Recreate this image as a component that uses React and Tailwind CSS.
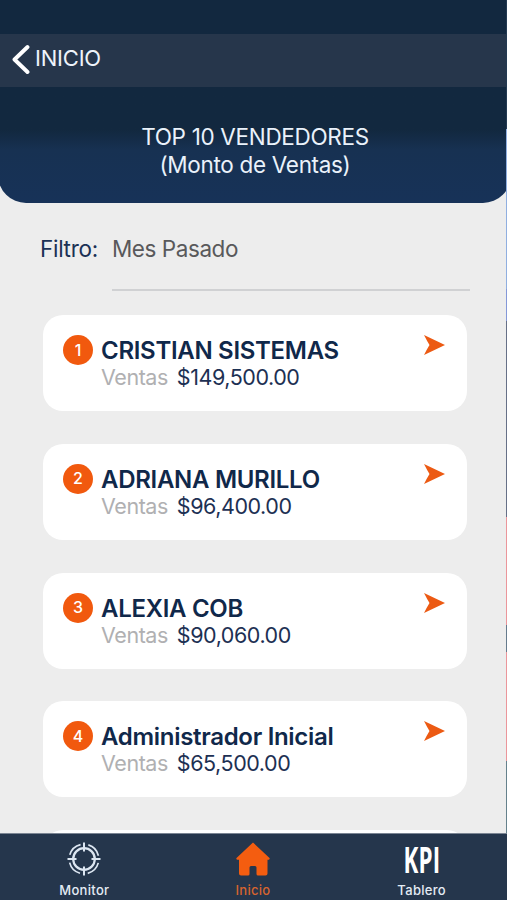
import React from 'react';

const sellers = [
    { rank: 1, name: 'CRISTIAN SISTEMAS', total: '$149,500.00' },
    { rank: 2, name: 'ADRIANA MURILLO', total: '$96,400.00' },
    { rank: 3, name: 'ALEXIA COB', total: '$90,060.00' },
    { rank: 4, name: 'Administrador Inicial', total: '$65,500.00' },
    { rank: 5, name: '', total: '' }
];

const MonitorIcon = () => (
    <svg className="h-[34px] w-[34px]" viewBox="0 0 34 34" fill="none" stroke="#dce6f1">
        <circle cx="17" cy="17" r="10.8" strokeWidth="2.2" />
        <circle
            cx="17"
            cy="17"
            r="14.8"
            strokeWidth="1.7"
            strokeDasharray="15.3 7.95"
            strokeDashoffset="-3.97"
        />
        <path d="M17 .5v9M17 24.5v9M.5 17h9M24.5 17h9" strokeWidth="2" />
    </svg>
);

const HomeIcon = () => (
    <svg className="h-[34px] w-[34px]" viewBox="0 0 34 34" fill="#f45d10">
        <path d="M17 .5 33.5 16q.7 1.5-.7 1.7H31.500V31.500q0 2-2 2H22q-1.500 0-1.500-1.500v-6.500q0-1.500-1.500-1.500h-4q-1.500 0-1.500 1.500V32q0 1.500-1.500 1.500H5q-2 0-2-2V17.700H1.200Q-.2 17.500.5 16Z" />
    </svg>
);

const SellerCard = ({ seller }) => (
    <div className="flex h-24 shrink-0 rounded-[20px] bg-white pl-5 pr-[22px] pt-5">
        {seller.name && (
            <>
                <div className="flex h-[30px] w-[30px] items-center justify-center rounded-full bg-[#f1590e] pb-px text-base font-medium leading-none text-white">
                    {seller.rank}
                </div>
                <div className="ml-2 flex-1 whitespace-nowrap">
                    <h2 className="text-[24px] font-semibold leading-[31px] tracking-[-0.3px] text-[#10284a]">
                        {seller.name}
                    </h2>
                    <p className="flex gap-[9px] text-[21.500px] leading-[23px] tracking-[-0.45px]">
                        <span className="text-[#b0b0b2]">Ventas</span>
                        <span className="text-[#1d3053]">{seller.total}</span>
                    </p>
                </div>
                <svg className="h-5 w-[21px]" viewBox="0 0 21 20" fill="#ec5a13">
                    <path d="M0 0 21 10 0 20Q3 14 5.500 10 3 6 0 0Z" />
                </svg>
            </>
        )}
    </div>
);

const App = () => {
    return (
        <div className="flex h-[900px] w-[507px] overflow-hidden bg-[#ededed] font-['Inter',sans-serif]">
            <div className="flex w-full flex-col">
                <div className="flex min-h-0 flex-1">
                    <div className="flex min-w-0 flex-1 flex-col overflow-hidden">
                        {/* Header */}
                        <header className="-ml-0.5 -mr-[5px] h-[203px] shrink-0 rounded-b-[28px] bg-linear-to-b from-[#12283f] from-[64%] via-[#173152] via-[74%] to-[#173258] pt-[34px] text-white">
                            <nav className="flex h-[53px] items-center bg-[#26364b] pb-1 pl-3.5">
                                <svg className="h-[30px] w-[18px]" viewBox="0 0 18 30" fill="none" stroke="white" strokeWidth="3.9" strokeLinecap="round" strokeLinejoin="round">
                                    <path d="M15.500 3 2.500 15.500 15.500 28" />
                                </svg>
                                <span className="ml-[5px] text-[22px] tracking-[-0.2px] text-[#eef3fa]">INICIO</span>
                            </nav>
                            <h1 className="mt-[36px] pl-px text-center text-[22.500px] leading-7 tracking-[-0.32px] text-[#eaf2fb]">
                                TOP 10 VENDEDORES
                                <br />
                                (Monto de Ventas)
                            </h1>
                        </header>

                        {/* Filter */}
                        <div className="mt-7 flex h-[60px] shrink-0 pl-10 pr-[36px] text-[22.500px] leading-9 tracking-[-0.45px]">
                            <span className="w-[72px] tracking-[-0.3px] text-[#1b3155]">Filtro:</span>
                            <span className="flex-1 border-b-2 border-[#d0d1d3] text-[#59595b]">Mes Pasado</span>
                        </div>

                        {/* Ranking */}
                        <main className="mt-6 flex min-h-0 flex-1 flex-col gap-[32.750px] overflow-hidden pl-[43px] pr-[39px]">
                            {sellers.map((seller) => (
                                <SellerCard key={seller.rank} seller={seller} />
                            ))}
                        </main>
                    </div>

                    {/* Right edge */}
                    <div className="flex w-px flex-col">
                        <div className="h-[129px] bg-[#233a52]" />
                        <div className="h-[160px] bg-[#90afe0]" />
                        <div className="h-8 bg-[#8498d8]" />
                        <div className="h-[196px] bg-[#667087]" />
                        <div className="h-[108px] bg-[#eb969b]" />
                        <div className="h-[27px] bg-[#667b8d]" />
                        <div className="h-[109px] bg-[#eb969b]" />
                        <div className="flex-1 bg-[#65818c]" />
                    </div>
                </div>

                {/* Tab bar */}
                <footer className="grid h-[67px] shrink-0 grid-cols-3 border-t border-[#7b8593] bg-[#25364c] pr-px text-[13px] font-medium leading-4 tracking-[0.3px] text-[#e4ebf4]">
                    <div className="flex flex-col items-center pt-[8px]">
                        <MonitorIcon />
                        <span className="mt-[6px]">Monitor</span>
                    </div>
                    <div className="flex flex-col items-center pt-[8px] text-[#d7642f]">
                        <HomeIcon />
                        <span className="mt-[6px]">Inicio</span>
                    </div>
                    <div className="flex flex-col items-center pt-[8px]">
                        <span className="h-[34px] scale-x-[0.64] font-['Open_Sans',sans-serif] text-[35px] font-bold leading-[35px] text-white">KPI</span>
                        <span className="mt-[6px]">Tablero</span>
                    </div>
                </footer>
            </div>
        </div>
    );
};

export default App;
